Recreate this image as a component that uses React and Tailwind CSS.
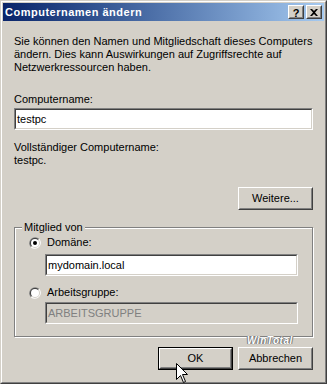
import React from 'react';

/* ──── Classic 3D bevel helpers ──── */
const raisedOuter = 'border border-t-white border-l-white border-b-[#404040] border-r-[#404040]';
const raisedInner = 'border border-t-[#d4d0c8] border-l-[#d4d0c8] border-b-[#808080] border-r-[#808080]';
const sunkenOuter = 'border border-t-[#808080] border-l-[#808080] border-b-white border-r-white';
const sunkenInner = 'border border-t-[#404040] border-l-[#404040] border-b-[#d4d0c8] border-r-[#d4d0c8]';

const Button = ({ children, isDefault, className = '' }) => {
  const face = (
    <div className={`h-full ${raisedOuter}`}>
      <div className={`h-full flex items-center justify-center ${raisedInner}`}>{children}</div>
    </div>
  );
  return (
    <div className={`w-[75px] h-[23px] ${isDefault ? 'border border-black' : ''} ${className}`}>
      {face}
    </div>
  );
};

const TextBox = ({ value, disabled, className = '' }) => (
  <div className={`h-[22px] ${sunkenOuter} ${className}`}>
    <div
      className={`h-full flex items-center pl-[1px] ${sunkenInner} ${
        disabled ? 'bg-[#d4d0c8] text-[#808080]' : 'bg-white text-black'
      }`}
    >
      {value}
    </div>
  </div>
);

const Radio = ({ checked }) => (
  <svg width="12" height="12" viewBox="0 0 12 12" className="shrink-0">
    <path d="M1.76 10.24 A6 6 0 0 1 10.24 1.76 Z" fill="#808080" />
    <path d="M10.24 1.76 A6 6 0 0 1 1.76 10.24 Z" fill="#ffffff" />
    <path d="M2.46 9.54 A5 5 0 0 1 9.54 2.46 Z" fill="#404040" />
    <path d="M9.54 2.46 A5 5 0 0 1 2.46 9.54 Z" fill="#d4d0c8" />
    <circle cx="6" cy="6" r="4" fill="#ffffff" />
    {checked && <circle cx="6" cy="6" r="2" fill="#000000" />}
  </svg>
);

const CaptionButton = ({ children }) => (
  <div className={`w-[16px] h-[14px] bg-[#d4d0c8] ${raisedOuter}`}>
    <div className={`h-full flex items-center justify-center ${raisedInner}`}>{children}</div>
  </div>
);

export default function App() {
  return (
    <div className="relative w-[327px] h-[384px] bg-[#d4d0c8] border border-t-[#d4d0c8] border-l-[#d4d0c8] border-b-[#404040] border-r-[#404040] text-[11px] leading-[13px] text-black font-['Liberation_Sans',Arial,sans-serif] select-none">
      <div className="h-full border border-t-white border-l-white border-b-[#808080] border-r-[#808080] p-px flex flex-col">
        {/* ──── Title bar ──── */}
        <div className="h-[18px] shrink-0 flex items-center pl-[2px] pr-[2px] bg-gradient-to-r from-[#0a246a] to-[#a6caf0]">
          <span className="flex-1 font-bold text-white whitespace-nowrap tracking-[0.5px]">Computernamen ändern</span>
          <div className="flex gap-[2px]">
            <CaptionButton>
              <span className="font-bold text-[11px] leading-[10px] pt-[1px]">?</span>
            </CaptionButton>
            <CaptionButton>
              <svg width="8" height="7" viewBox="0 0 8 7">
                <path d="M0 0 L2 0 L4 2 L6 0 L8 0 L5 3.5 L8 7 L6 7 L4 5 L2 7 L0 7 L3 3.5 Z" fill="#000" />
              </svg>
            </CaptionButton>
          </div>
        </div>

        {/* ──── Body ──── */}
        <div className="flex-1 flex flex-col px-[11px]">
          <p className="mt-[14px] whitespace-nowrap">
            Sie können den Namen und Mitgliedschaft dieses Computers
            <br />
            ändern. Dies kann Auswirkungen auf Zugriffsrechte auf
            <br />
            Netzwerkressourcen haben.
          </p>

          <p className="mt-[19px]">Computername:</p>
          <TextBox value="testpc" className="mt-[2px]" />

          <p className="mt-[11px]">Vollständiger Computername:</p>
          <p>testpc.</p>

          <Button className="mt-[20px] self-end">Weitere...</Button>

          {/* ──── Group box ──── */}
          <div className="relative mt-[17px] h-[110px] border border-[#808080] shadow-[1px_1px_0_#fff,inset_1px_1px_0_#fff] flex flex-col pt-[8px] pl-[14px] pr-[14px]">
            <span className="absolute left-[7px] top-[-7px] px-[2px] bg-[#d4d0c8]">Mitglied von</span>

            <div className="flex items-center gap-[6px] h-[13px]">
              <Radio checked />
              <span>Domäne:</span>
            </div>
            <TextBox value="mydomain.local" className="mt-[5px] ml-[16px]" />

            <div className="flex items-center gap-[6px] h-[13px] mt-[10px]">
              <Radio />
              <span>Arbeitsgruppe:</span>
            </div>
            <TextBox value="ARBEITSGRUPPE" disabled className="mt-[3px] ml-[16px]" />
          </div>

          {/* ──── Dialog buttons ──── */}
          <div className="mt-[10px] flex justify-end gap-[5px]">
            <Button isDefault>OK</Button>
            <Button>Abbrechen</Button>
          </div>
        </div>
      </div>

      {/* ──── Watermark ──── */}
      <span className="absolute left-[246px] top-[335px] text-[10px] leading-[10px] font-bold italic text-white tracking-[0.5px] [text-shadow:0_0_1px_#555,1px_0_0_#888,-1px_0_0_#888]">
        WinTotal
      </span>

      {/* ──── Mouse pointer ──── */}
      <svg className="absolute left-[175px] top-[362px]" width="13" height="21" viewBox="0 0 13 21">
        <path
          d="M0.5 0.5 L0.5 16.5 L4.5 12.5 L7.5 19.5 L9.5 18.5 L6.5 11.5 L11.5 11.5 Z"
          fill="#fff"
          stroke="#000"
          strokeWidth="1"
          strokeLinejoin="miter"
        />
      </svg>
    </div>
  );
}
